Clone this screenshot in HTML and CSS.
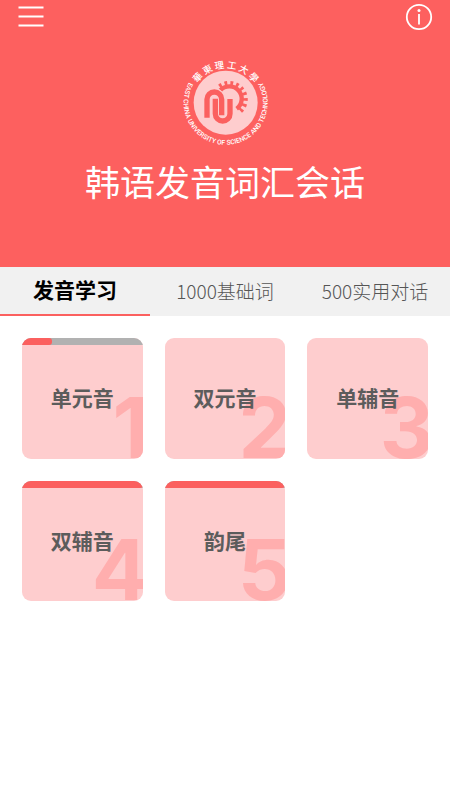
FILE: index.html
```
<!DOCTYPE html>
<html lang="zh-CN">
<head>
  <meta charset="UTF-8">
  <meta name="viewport" content="width=device-width, initial-scale=1.0">
  <title>韩语发音词汇会话</title>
  <link rel="stylesheet" href="styles.css">
</head>
<body>

  <!-- Header -->
  <header class="hero">
    <div class="toolbar">
      <button class="icon-btn" type="button" aria-label="菜单">
        <svg width="26" height="22" viewBox="0 0 26 22" stroke="#fff" stroke-width="1.8">
          <path d="M.5 1.5h25M.5 10.5h25M.5 19.5h25"/>
        </svg>
      </button>
      <button class="icon-btn" type="button" aria-label="关于">
        <svg width="28" height="28" viewBox="0 0 28 28" fill="none" stroke="#fff" stroke-width="1.8">
          <circle cx="14" cy="14" r="12.2"/>
          <path d="M14 11v10.5"/>
          <circle cx="14" cy="7.5" r="1.5" fill="#fff" stroke="none"/>
        </svg>
      </button>
    </div>

    <!-- University badge -->
    <svg class="badge" width="110" height="100" viewBox="0 0 330 300" role="img" aria-label="華東理工大學">
      <defs>
        <path id="arcTop" d="M64 158A103 103 0 0 1 270 158"/>
        <path id="arcBottom" d="M57 97A126 126 0 1 0 277 97"/>
      </defs>
      <circle cx="167" cy="158" r="96" fill="#fecdce"/>
      <text class="badge-cn"><textPath href="#arcTop" startOffset="50%">華 東 理 工 大 學</textPath></text>
      <text class="badge-en"><textPath href="#arcBottom" startOffset="50%">EAST CHINA UNIVERSITY OF SCIENCE AND TECHNOLOGY</textPath></text>
      <g fill="none" stroke="#fb605f">
        <path stroke-width="13" d="M151 121A37 37 0 1 1 200 176"/>
        <path stroke-width="15" stroke-dasharray="8 9" d="M149 110A47 47 0 1 1 207 186"/>
        <path stroke="#fecdce" stroke-width="22" d="M111 203V148a22 22 0 0 1 44 0V191M180 146V191"/>
        <path stroke-width="16" d="M111 203V148a22 22 0 0 1 44 0V196"/>
        <path stroke-width="16" d="M136 146V191a22 22 0 0 0 44 0V147"/>
      </g>
    </svg>

    <h1 class="title">韩语发音词汇会话</h1>
  </header>

  <!-- Tabs -->
  <nav class="tabs">
    <button class="tab active" type="button">发音学习</button>
    <button class="tab" type="button">1000基础词</button>
    <button class="tab" type="button">500实用对话</button>
  </nav>

  <!-- Lessons -->
  <main class="lessons">
    <button class="card" type="button">
      <span class="progress"><span class="bar" style="width: 25%"></span></span>
      <span class="num">1</span>
      <span class="name">单元音</span>
    </button>
    <button class="card" type="button">
      <span class="num">2</span>
      <span class="name">双元音</span>
    </button>
    <button class="card" type="button">
      <span class="num">3</span>
      <span class="name">单辅音</span>
    </button>
    <button class="card" type="button">
      <span class="progress"><span class="bar" style="width: 100%"></span></span>
      <span class="num">4</span>
      <span class="name">双辅音</span>
    </button>
    <button class="card" type="button">
      <span class="progress"><span class="bar" style="width: 100%"></span></span>
      <span class="num">5</span>
      <span class="name">韵尾</span>
    </button>
  </main>

</body>
</html>
```
FILE: styles.css
```
* {
  box-sizing: border-box;
}
body {
  margin: 0;
  background: #fff;
  font-family: "Noto Sans CJK SC", sans-serif;
}
button {
  border: 0;
  padding: 0;
  background: none;
  font-family: inherit;
  cursor: pointer;
}

/* Header */
.hero {
  display: flex;
  flex-direction: column;
  align-items: center;
  padding-bottom: 61px;
  background: #fd605f;
  color: #fff;
}
.toolbar {
  display: flex;
  justify-content: space-between;
  align-items: center;
  width: 100%;
  height: 34px;
  padding: 0 17px 0 18px;
}
.icon-btn {
  display: flex;
}
.badge {
  margin-top: 16px;
}
.badge-cn {
  font: 500 28px "Noto Sans CJK TC", sans-serif;
  fill: #fff;
  text-anchor: middle;
}
.badge-en {
  font: 500 20px Roboto, sans-serif;
  fill: #fff;
  text-anchor: middle;
}
.title {
  margin: 6px 0 0;
  font-size: 35px;
  font-weight: 400;
  line-height: 50px;
}

/* Tabs */
.tabs {
  display: grid;
  grid-template-columns: repeat(3, 1fr);
  height: 49px;
  background: #f1f1f1;
}
.tab {
  border-bottom: 2px solid transparent;
  color: #555;
  font-size: 19px;
  font-weight: 300;
}
.tab.active {
  padding-bottom: 4px;
  border-color: #fb605f;
  color: #000;
  font-size: 21px;
  font-weight: 700;
}

/* Lesson cards */
.lessons {
  display: grid;
  grid-template-columns: repeat(3, 1fr);
  gap: 22px;
  padding: 22px;
}
.card {
  position: relative;
  display: flex;
  align-items: center;
  justify-content: center;
  aspect-ratio: 1;
  padding-bottom: 3px;
  overflow: hidden;
  border-radius: 9px;
  background: #fecdce;
}
.progress {
  position: absolute;
  top: 0;
  left: 0;
  width: 100%;
  height: 7px;
  background: #b1b1b1;
}
.bar {
  display: block;
  height: 100%;
  border-radius: 0 3px 3px 0;
  background: #fb605f;
}
.num {
  position: absolute;
  right: -6px;
  bottom: 0;
  color: #ffaeae;
  font: 700 84px/62px Inter, sans-serif;
}
.name {
  position: relative;
  color: #5c5c5c;
  font-size: 21px;
  font-weight: 700;
}
```
